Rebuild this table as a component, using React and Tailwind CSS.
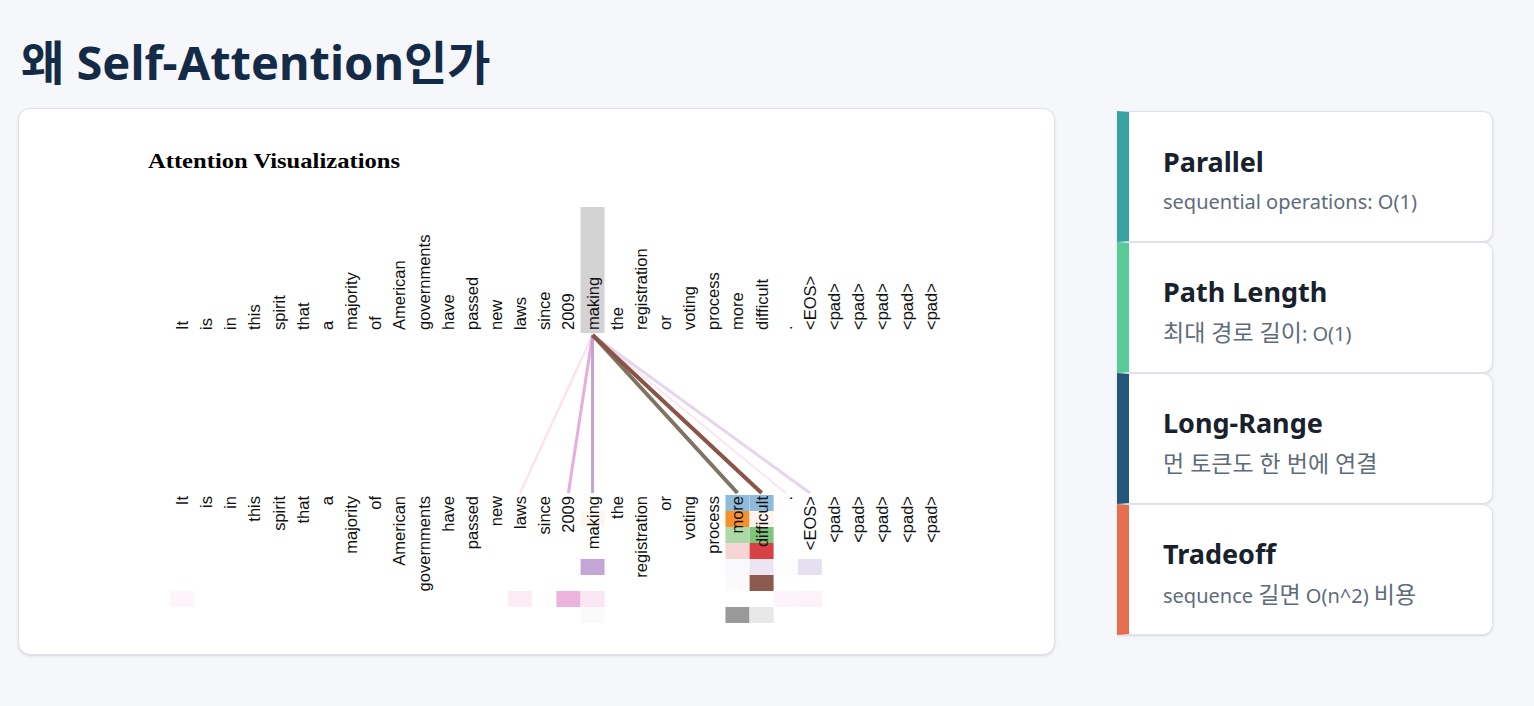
import React from 'react';

const tokens = [
    'It', 'is', 'in', 'this', 'spirit', 'that', 'a', 'majority', 'of', 'American', 'governments',
    'have', 'passed', 'new', 'laws', 'since', '2009', 'making', 'the', 'registration', 'or',
    'voting', 'process', 'more', 'difficult', '.', '<EOS>', '<pad>', '<pad>', '<pad>', '<pad>', '<pad>',
];

const colX = (i) => 182 + i * 24.15;
const ROW_Y = 495;
const ROW_H = 16;

// [column, head row, colour]
const cells = [
    [23, 0, '#8fbbda'], [23, 1, '#f8902e'], [23, 2, '#acd9a6'], [23, 3, '#f5d4d4'],
    [23, 4, '#f9f8fc'], [23, 5, '#fbf9f9'], [23, 7, '#999999'],
    [24, 0, '#8fbbda'], [24, 1, '#fff5ee'], [24, 2, '#80c47b'], [24, 3, '#d94244'],
    [24, 4, '#ebe4f2'], [24, 5, '#8c5a4f'], [24, 7, '#e8e8e8'],
    [25, 4, '#fcfbfd'], [25, 6, '#fdf3fa'],
    [26, 4, '#e6dff0'], [26, 6, '#fcf2f9'],
    [17, 1, '#fff5ef'], [17, 4, '#c4a6d6'], [17, 6, '#fbe6f3'], [17, 7, '#fafafb'],
    [16, 6, '#ecb4dc'],
    [14, 6, '#fcecf6'],
    [0, 6, '#fdf5fa'],
];

// [target column, colour, width]
const links = [
    [14, '#fbe3ef', 2.5],
    [25, '#f8e6f0', 2],
    [26, '#e5d6ec', 3],
    [16, '#e8aedb', 3],
    [17, '#c4a2d2', 3],
    [23, '#7f7361', 4],
    [24, '#8b5446', 4],
];

const cards = [
    { title: 'Parallel', text: 'sequential operations: O(1)', stripe: 'border-l-[#38a3a5]' },
    { title: 'Path Length', text: '최대 경로 길이: O(1)', stripe: 'border-l-[#57cc99]' },
    { title: 'Long-Range', text: '먼 토큰도 한 번에 연결', stripe: 'border-l-[#22577a]' },
    { title: 'Tradeoff', text: 'sequence 길면 O(n^2) 비용', stripe: 'border-l-[#e76f51]' },
];

// hangul runs render a bit larger than the latin text around them
const HANGUL = /([\uAC00-\uD7A3]+(?:\s+[\uAC00-\uD7A3]+)*)/;

const Mixed = ({ text }) =>
    text.split(HANGUL).map((part, i) =>
        HANGUL.test(part) ? (
            <span key={i} className="text-[23px] leading-[28px]">{part}</span>
        ) : (
            <React.Fragment key={i}>{part}</React.Fragment>
        )
    );

const AttentionFigure = () => {
    const origin = colX(17);
    return (
        <svg width="1035" height="545" viewBox="19 109 1035 545" className="block">
            <text
                x="148"
                y="168"
                fontFamily="'Liberation Serif', serif"
                fontWeight="bold"
                fontSize="22"
                textLength="252"
                lengthAdjust="spacingAndGlyphs"
                fill="#000"
            >
                Attention Visualizations
            </text>

            {/* highlighted query token */}
            <rect x={origin - 12} y="207" width="24" height="126" fill="#d3d3d3" />

            {/* attention heads */}
            {cells.map(([c, r, color], i) => (
                <rect key={i} x={colX(c) - 12} y={ROW_Y + r * ROW_H} width="24" height={ROW_H} fill={color} />
            ))}

            {links.map(([c, color, w], i) => (
                <line key={i} x1={origin} y1="335" x2={colX(c)} y2="493" stroke={color} strokeWidth={w} />
            ))}

            {tokens.map((t, i) => (
                <text
                    key={'top' + i}
                    x={colX(i)}
                    y="330"
                    transform={`rotate(-90 ${colX(i)} 330)`}
                    textAnchor="start"
                    dominantBaseline="central"
                    fontFamily="'Liberation Sans', sans-serif"
                    fontSize="16.5"
                    fill="#111"
                >
                    {t}
                </text>
            ))}

            {tokens.map((t, i) => (
                <text
                    key={'bot' + i}
                    x={colX(i)}
                    y="496"
                    transform={`rotate(-90 ${colX(i)} 496)`}
                    textAnchor="end"
                    dominantBaseline="central"
                    fontFamily="'Liberation Sans', sans-serif"
                    fontSize="16.5"
                    fill="#111"
                >
                    {t}
                </text>
            ))}
        </svg>
    );
};

const App = () => {
    return (
        <div className="min-h-screen bg-[#f6f7fb] px-[18px] pt-[30px] font-['Noto_Sans','Noto_Sans_CJK_KR',sans-serif]">
            <h1 className="pl-[3px] text-[47px] leading-[64px] font-bold text-[#142b47] mb-[14px]">
                왜 Self-Attention인가
            </h1>

            <div className="flex items-start">
                {/* Figure */}
                <div className="w-[1037px] h-[547px] shrink-0 overflow-hidden rounded-[12px] border border-[#dde1e8] bg-white shadow-sm">
                    <AttentionFigure />
                </div>

                {/* Key points */}
                <div className="ml-[62px] mt-[3px] flex w-[376px] flex-col">
                    {cards.map((card) => (
                        <div
                            key={card.title}
                            className={`flex h-[131px] flex-col justify-center rounded-r-[10px] border border-l-[12px] border-[#dfe3ea] bg-white pl-[34px] pt-[7px] shadow-sm ${card.stripe}`}
                        >
                            <h3 className="text-[27px] leading-[36px] font-bold text-[#19212d]">{card.title}</h3>
                            <p className="mt-[8px] text-[20px] leading-[28px] text-[#5f6b7a]">
                                <Mixed text={card.text} />
                            </p>
                        </div>
                    ))}
                </div>
            </div>
        </div>
    );
};

export default App;
